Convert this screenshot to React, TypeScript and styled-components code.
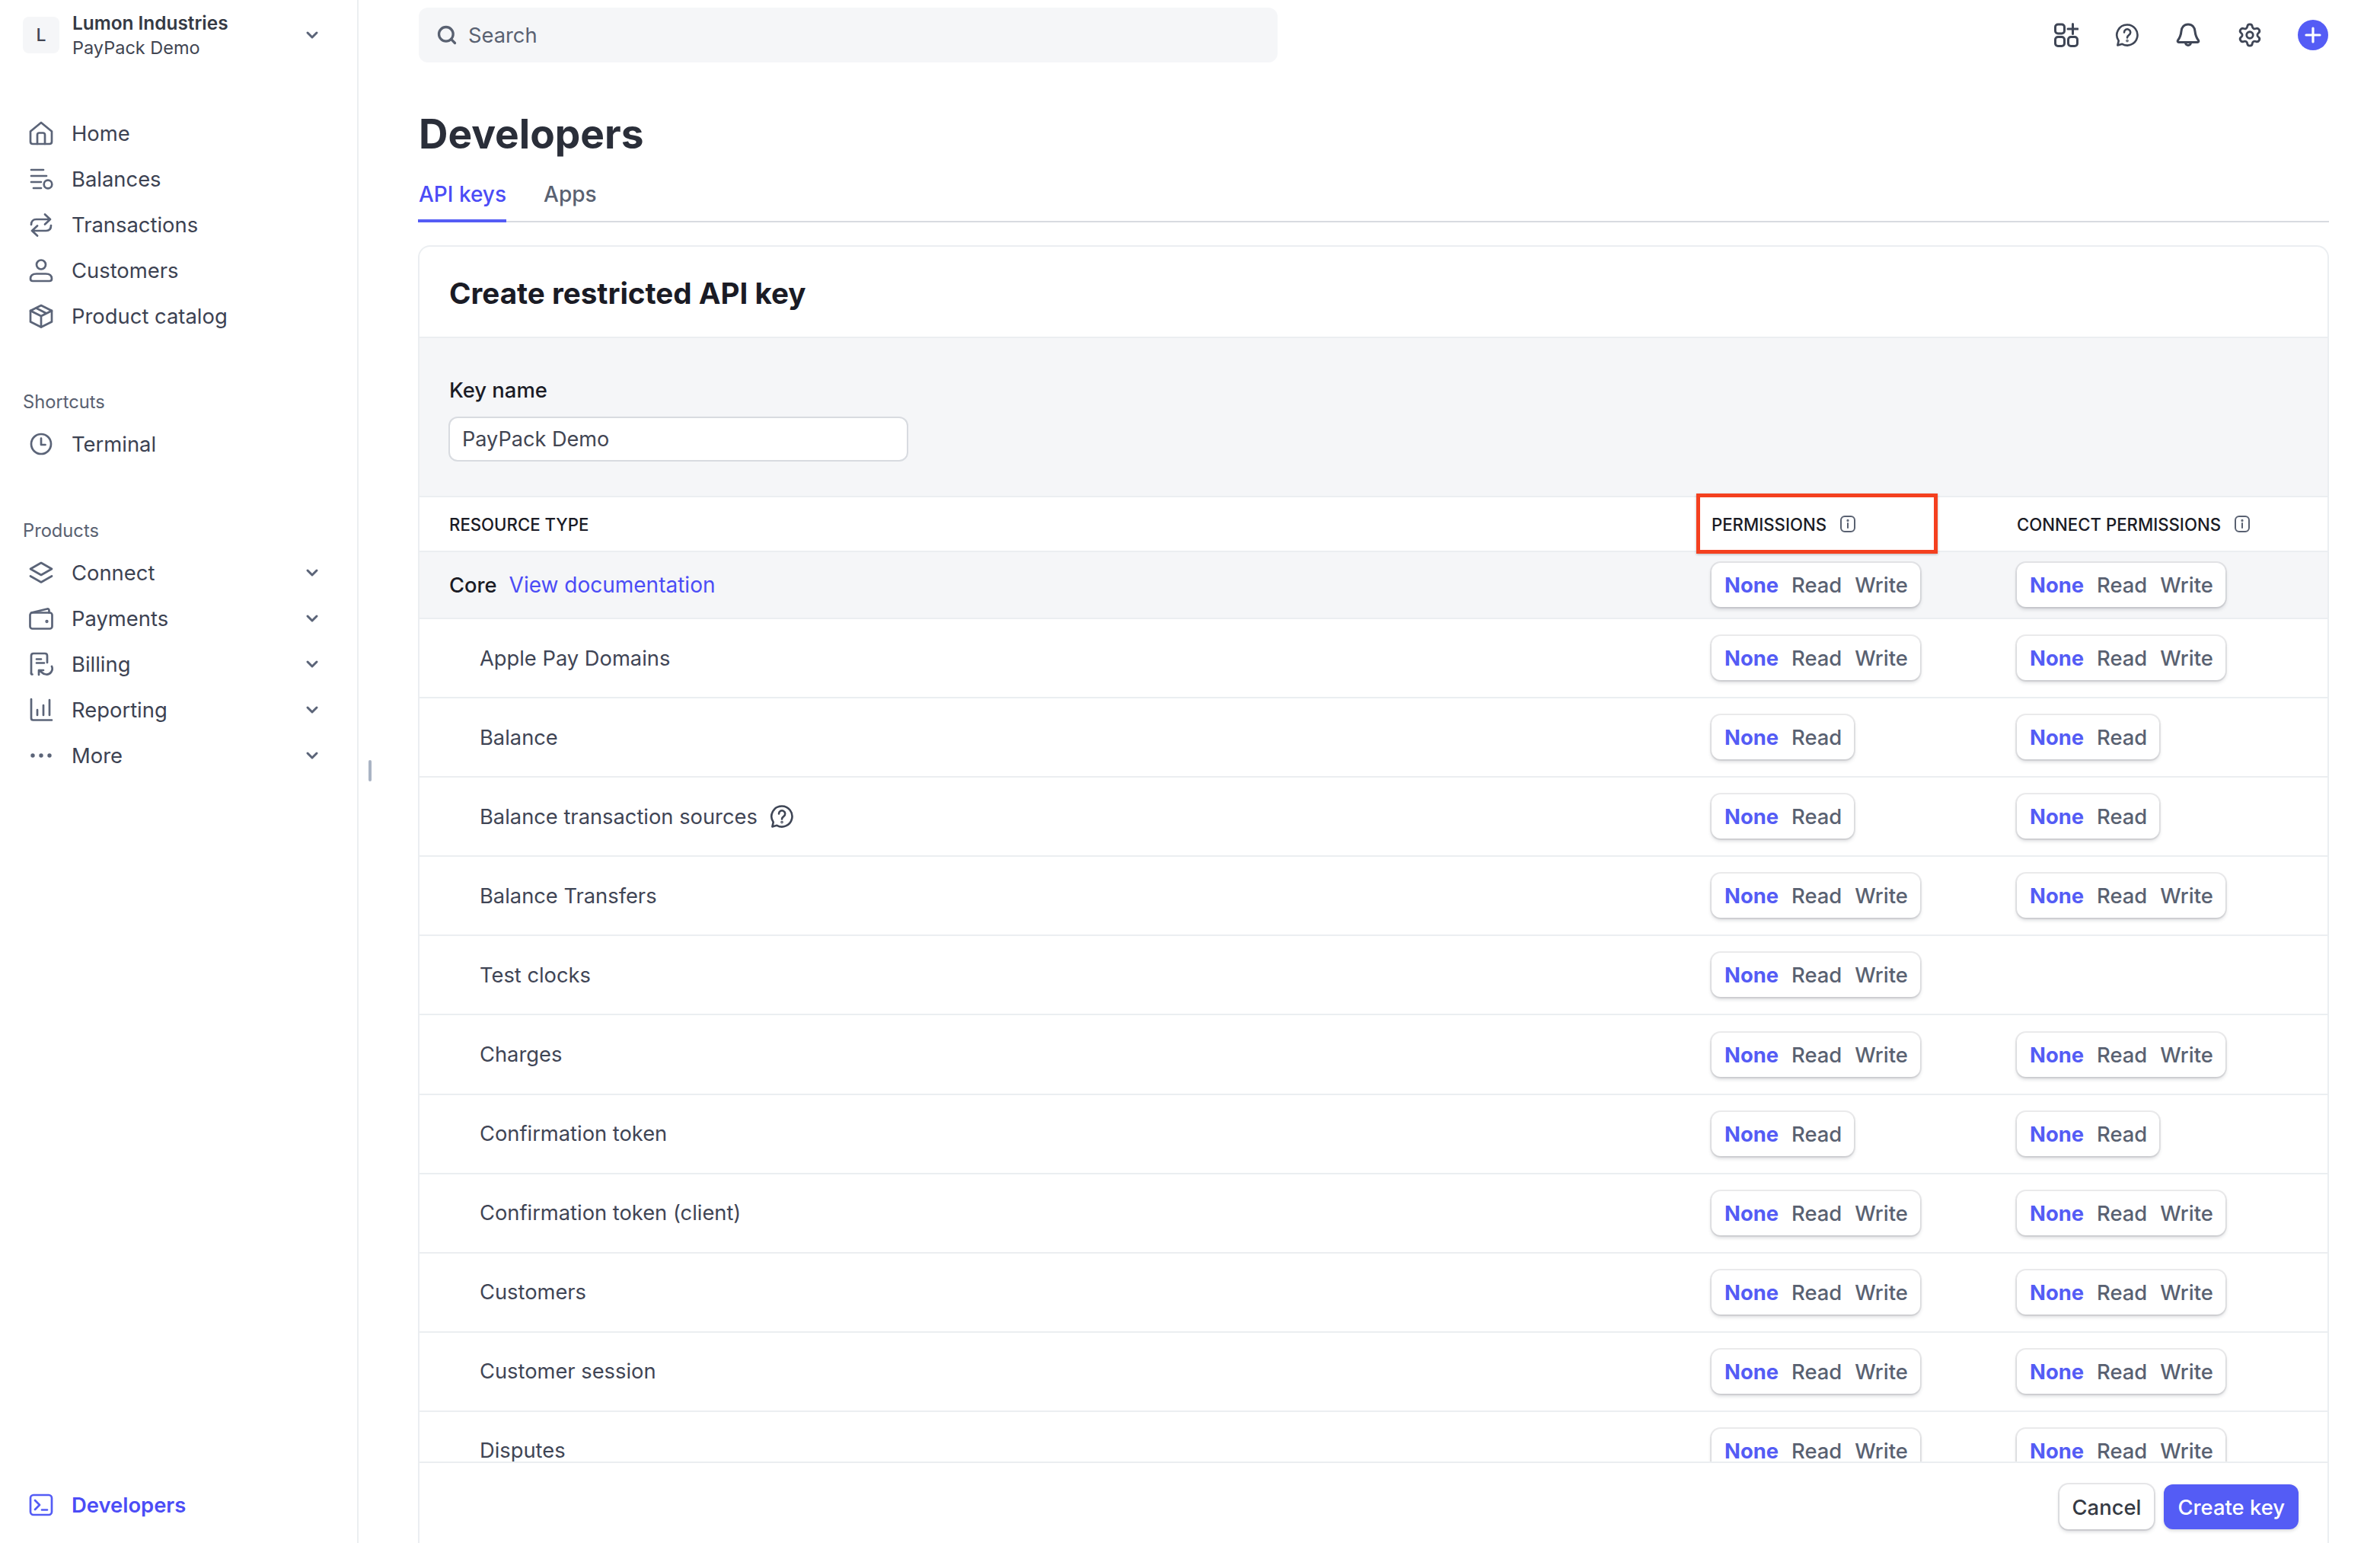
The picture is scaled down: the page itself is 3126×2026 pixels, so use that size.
import React from 'react';
import styled, { createGlobalStyle } from 'styled-components';
import { Search, Settings } from 'lucide-react';

const GlobalStyle = createGlobalStyle`
  * { box-sizing: border-box; }
  html, body { margin: 0; padding: 0; background: #fff; }
  body { font-family: Inter, "Liberation Sans", sans-serif; color: #353a44; }
`;

const Layout = styled.div`
  display: flex;
  width: 3126px;
  height: 2026px;
  overflow: hidden;
  position: relative;
`;

const Sidebar = styled.aside`
  width: 471px;
  flex-shrink: 0;
  height: 100%;
  border-right: 2px solid #ebeef1;
  padding: 22px 48px 20px 30px;
  display: flex;
  flex-direction: column;
`;

const Account = styled.div`
  display: flex;
  align-items: center;
  height: 48px;
  margin-bottom: 75px;
`;

const AccountBadge = styled.div`
  width: 48px;
  height: 48px;
  border-radius: 8px;
  background: #f5f6f8;
  display: flex;
  align-items: center;
  justify-content: center;
  font-size: 23px;
  font-weight: 500;
  color: #414552;
  margin-right: 17px;
`;

const AccountText = styled.div`
  flex: 1;
  display: flex;
  flex-direction: column;
  gap: 1px;
`;

const AccountName = styled.div`
  font-size: 24.4px;
  line-height: 31px;
  font-weight: 600;
  color: #353a44;
`;

const AccountSub = styled.div`
  font-size: 23.5px;
  line-height: 31px;
  color: #414552;
`;

const NavGroup = styled.div`
  display: flex;
  flex-direction: column;
`;

const NavRow = styled.div`
  height: 60px;
  display: flex;
  align-items: center;
  padding-left: 8px;
  gap: 24px;
`;

const NavLabel = styled.span<{ $active?: boolean }>`
  flex: 1;
  font-size: 27.4px;
  font-weight: ${({ $active }) => ($active ? 600 : 400)};
  color: ${({ $active }) => ($active ? '#4b4cf6' : '#3c4252')};
`;

const SectionLabel = styled.div<{ $top: number }>`
  font-size: 23.7px;
  line-height: 30px;
  color: #596171;
  margin-top: ${({ $top }) => $top}px;
  margin-bottom: 10px;
`;

const SidebarFoot = styled.div`
  margin-top: auto;
`;

const ResizeHandle = styled.div`
  position: absolute;
  left: 484px;
  top: 998px;
  width: 4px;
  height: 28px;
  border-radius: 2px;
  background: #aab4c4;
`;

const Main = styled.main`
  flex: 1;
  min-width: 0;
  height: 100%;
  padding: 0 67px 0 78px;
  display: flex;
  flex-direction: column;
`;

const TopBar = styled.div`
  height: 92px;
  flex-shrink: 0;
  display: flex;
  align-items: center;
  justify-content: space-between;
  padding: 0 1px 0 1px;
`;

const SearchBox = styled.div`
  width: 1128px;
  height: 72px;
  border-radius: 12px;
  background: #f5f6f8;
  display: flex;
  align-items: center;
  padding-left: 23px;
  gap: 14px;
  font-size: 27.3px;
  color: #596171;
`;

const TopIcons = styled.div`
  display: flex;
  align-items: center;
  gap: 48px;
  color: #3f4656;
`;

const AddButton = styled.div`
  width: 40px;
  height: 40px;
  margin-left: -2px;
  border-radius: 50%;
  background: #545cf5;
  display: flex;
  align-items: center;
  justify-content: center;
`;

const PageTitle = styled.h1`
  margin: 50px 0 0 1px;
  font-size: 53.2px;
  line-height: 68px;
  font-weight: 700;
  color: #2a2e39;
`;

const Tabs = styled.div`
  margin-top: 12px;
  display: flex;
  gap: 48px;
  border-bottom: 2px solid #d8dbe0;
  height: 70px;
`;

const Tab = styled.div<{ $active?: boolean }>`
  font-size: 28px;
  font-weight: 500;
  line-height: 34px;
  padding: 16px 0 0 1px;
  height: 70px;
  color: ${({ $active }) => ($active ? '#4b4cf6' : '#596171')};
  border-bottom: ${({ $active }) => ($active ? '4px solid #545cf5' : '4px solid transparent')};
`;

const Card = styled.section`
  margin-top: 30px;
  flex: 1;
  min-height: 0;
  border: 2px solid #ebeef1;
  border-bottom: 0;
  border-radius: 16px 16px 0 0;
  display: flex;
  flex-direction: column;
`;

const CardHead = styled.div`
  height: 120px;
  flex-shrink: 0;
  padding: 3px 0 0 39px;
  display: flex;
  align-items: center;
  font-size: 38.6px;
  font-weight: 700;
  color: #1a1b25;
  border-bottom: 2px solid #ebeef1;
`;

const KeySection = styled.div`
  flex-shrink: 0;
  height: 209px;
  background: #f5f6f8;
  padding: 51px 0 0 39px;
  border-bottom: 2px solid #ebeef1;
`;

const FieldLabel = styled.div`
  font-size: 27.4px;
  line-height: 34px;
  font-weight: 500;
  color: #1a1b25;
  margin-bottom: 18px;
`;

const NameInput = styled.div`
  width: 604px;
  height: 59px;
  margin-left: -1px;
  border: 2px solid #d8dbe0;
  border-radius: 12px;
  background: #fff;
  padding-left: 16px;
  display: flex;
  align-items: center;
  font-size: 27.1px;
  color: #414552;
`;

const TableArea = styled.div`
  flex: 1;
  min-height: 0;
  overflow: hidden;
`;

const columns = '1697px 401px 1fr';

const HeadRow = styled.div`
  height: 72px;
  flex-shrink: 0;
  display: grid;
  grid-template-columns: ${columns};
  border-bottom: 2px solid #ebeef1;
  position: relative;
  z-index: 1;
`;

const HeadCell = styled.div<{ $pad?: boolean }>`
  position: relative;
  display: flex;
  align-items: center;
  gap: 18px;
  padding-left: ${({ $pad }) => ($pad ? '39px' : '0')};
  font-size: 22.2px;
  font-weight: 500;
  color: #1a1b25;
`;

const Highlight = styled.div`
  position: absolute;
  left: -20px;
  top: -5px;
  width: 317px;
  height: 79px;
  border: 5px solid #f4401f;
  box-shadow: 0 1px 3px rgba(0, 0, 0, 0.25);
  pointer-events: none;
`;

const Row = styled.div<{ $group?: boolean }>`
  height: ${({ $group }) => ($group ? '88px' : '104.1px')};
  display: grid;
  grid-template-columns: ${columns};
  align-items: center;
  border-bottom: 2px solid #ebeef1;
  background: ${({ $group }) => ($group ? '#f5f6f8' : '#fff')};
`;

const RowName = styled.div<{ $group?: boolean }>`
  display: flex;
  align-items: center;
  padding-left: ${({ $group }) => ($group ? '39px' : '79px')};
  gap: 16px;
  font-size: 27.3px;
  font-weight: ${({ $group }) => ($group ? 500 : 400)};
  color: ${({ $group }) => ($group ? '#1a1b25' : '#3f4555')};
`;

const DocLink = styled.a`
  font-size: 28px;
  font-weight: 400;
  color: #4b4cf6;
`;

const Pill = styled.div`
  display: inline-flex;
  align-items: center;
  height: 58px;
  padding: 0 16px 0 17px;
  gap: 17px;
  border-radius: 12px;
  background: #fff;
  box-shadow: 0 0 0 2px rgba(64, 68, 82, 0.1), 0 3px 5px rgba(64, 68, 82, 0.22);
  font-size: 27.4px;
  font-weight: 500;
  color: #596171;
`;

const PillOption = styled.span<{ $active?: boolean }>`
  font-weight: ${({ $active }) => ($active ? 700 : 500)};
  color: ${({ $active }) => ($active ? '#545cf5' : '#596171')};
`;

const Footer = styled.div`
  height: 107px;
  flex-shrink: 0;
  border-top: 2px solid #ebeef1;
  background: #fff;
  padding: 28px 38px 0 0;
  display: flex;
  justify-content: flex-end;
  gap: 13px;
  position: relative;
`;

const Button = styled.div<{ $primary?: boolean }>`
  height: 59px;
  padding: 0 ${({ $primary }) => ($primary ? '18px' : '17px')};
  border-radius: 12px;
  display: flex;
  align-items: center;
  font-size: 27.4px;
  font-weight: 500;
  background: ${({ $primary }) => ($primary ? '#545cf5' : '#fff')};
  color: ${({ $primary }) => ($primary ? '#fff' : '#353a44')};
  box-shadow: ${({ $primary }) =>
    $primary
      ? '0 2px 4px rgba(64, 68, 82, 0.2)'
      : '0 0 0 2px rgba(64, 68, 82, 0.12), 0 3px 5px rgba(64, 68, 82, 0.22)'};
`;

type IconProps = { children: React.ReactNode; size?: number; color?: string; sw?: number };

const Ico = ({ children, size = 32, color = '#5b6478', sw = 2.7 }: IconProps) => (
  <svg
    width={size}
    height={size}
    viewBox="0 0 32 32"
    fill="none"
    stroke={color}
    strokeWidth={sw}
    strokeLinecap="round"
    strokeLinejoin="round"
    style={{ flexShrink: 0 }}
  >
    {children}
  </svg>
);

const Chevron = () => (
  <svg width="22" height="22" viewBox="0 0 22 22" fill="none" stroke="#5b6478" strokeWidth="3" strokeLinecap="round" strokeLinejoin="round" style={{ flexShrink: 0 }}>
    <path d="M5 8l6 6 6-6" />
  </svg>
);

const InfoIcon = () => (
  <svg width="20" height="22" viewBox="0 0 20 22" fill="none" stroke="#596171" strokeWidth="2" strokeLinecap="round" style={{ flexShrink: 0 }}>
    <rect x="1" y="1" width="18" height="20" rx="5" />
    <path d="M10 10v6" />
    <circle cx="10" cy="6.4" r="0.6" fill="#596171" />
  </svg>
);

const HelpIcon = ({ color = '#3f4656' }: { color?: string }) => (
  <Ico color={color} sw={2.6}>
    <path d="M16 2.5a13.5 13.5 0 1 1-6.6 25.3L3.4 29.4l1.3-5.8A13.5 13.5 0 0 1 16 2.5z" />
    <path d="M12 12.4a4.1 4.1 0 1 1 6.4 3.4c-1.6 1.1-2.4 1.9-2.4 3.6" />
    <circle cx="16" cy="23.6" r="0.5" fill={color} />
  </Ico>
);

const HomeIcon = () => (
  <Ico>
    <path d="M2 13.5L16 2l14 11.5V27c0 2-1 3-3 3H5c-2 0-3-1-3-3z" />
    <path d="M11 30V18c0-1.5.8-2.5 2.5-2.5h5c1.700 0 2.500 1 2.500 2.500v12" />
  </Ico>
);

const BalancesIcon = () => (
  <Ico>
    <path d="M3 4h16M3 12h20M3 20h13M6 28h10" />
    <circle cx="25" cy="23" r="5.300" />
  </Ico>
);

const TransactionsIcon = () => (
  <Ico>
    <path d="M3 16c0-4.500 2.500-7 6.500-7H28M21 2.500L28 9l-7 6.500" />
    <path d="M29 17c0 4.500-2.500 7-6.500 7H4M11 17.500L4 24l7 6.500" />
  </Ico>
);

const CustomersIcon = () => (
  <Ico>
    <circle cx="16" cy="8.500" r="6" />
    <path d="M2 27c0-4.500 3.500-6.500 8-6.500h12c4.500 0 8 2 8 6.500 0 2-1 3-3 3H5c-2 0-3-1-3-3z" />
  </Ico>
);

const BoxIcon = () => (
  <Ico>
    <path d="M16 2l14 7v14.500L16 30.500 2 23.500V9z" />
    <path d="M2 9l14 7 14-7M16 16v14.500M9.500 5.500l13.500 7" />
  </Ico>
);

const ClockIcon = () => (
  <Ico>
    <circle cx="16" cy="16" r="13" />
    <path d="M16 8.500V17h5.500" />
  </Ico>
);

const ConnectIcon = () => (
  <Ico>
    <path d="M16 3l14 8-14 8-14-8z" />
    <path d="M2 20.500l14 8 14-8" />
  </Ico>
);

const WalletIcon = () => (
  <Ico>
    <rect x="1.500" y="8.500" width="29" height="21" rx="3" />
    <path d="M3 8.500L24 3.500c1.500-.3 2.500.5 2.500 2v3" />
    <circle cx="23.500" cy="20" r="0.800" fill="#5b6478" />
  </Ico>
);

const BillingIcon = () => (
  <Ico>
    <path d="M3 28V5c0-2 1-3 3-3h15c2 0 3 1 3 3v9" />
    <path d="M10 9.500h6M10 14.500h10" />
    <path d="M3 28c0 .8.500 1.500 1.500 1.500" />
    <path d="M30 19a7.500 7.500 0 0 1-7.500 10.500c-2.500 0-4-1-5.500-2.500l-3-3M13 30v-6h6" />
  </Ico>
);

const ReportingIcon = () => (
  <Ico>
    <path d="M3 2v25c0 1.500 1 2.500 2.500 2.500H30" />
    <path d="M11 16v7M19 10v13M27 3v20" />
  </Ico>
);

const MoreIcon = () => (
  <svg width="32" height="32" viewBox="0 0 32 32" fill="#5b6478" style={{ flexShrink: 0 }}>
    <circle cx="5" cy="16" r="2.700" />
    <circle cx="16" cy="16" r="2.700" />
    <circle cx="27" cy="16" r="2.700" />
  </svg>
);

const TerminalIcon = () => (
  <Ico color="#545cf5">
    <rect x="2" y="3" width="28" height="26" rx="4" />
    <path d="M8 10l6 6-6 6M17 22.500h7" />
  </Ico>
);

const AppsIcon = () => (
  <Ico color="#3f4656" sw={3}>
    <rect x="1.500" y="2" width="12" height="12" rx="3.500" />
    <rect x="1.500" y="18.500" width="12" height="12" rx="3.500" />
    <rect x="18.500" y="18.500" width="12" height="12" rx="3.500" />
    <path d="M24.500 1.500v13M18 8h13" />
  </Ico>
);

const BellIcon = () => (
  <Ico color="#3f4656" sw={3}>
    <path d="M16 2c-5.500 0-8.500 4-9 9-.5 5-1.500 8-4.500 12-.8 1.200-.2 2.500 1.200 2.500h24.600c1.400 0 2-1.300 1.200-2.500-3-4-4-7-4.500-12-.5-5-3.500-9-9-9z" />
    <path d="M12.500 26a3.500 3.500 0 0 0 7 0" />
  </Ico>
);

type Access = 'rw' | 'r' | null;

type ResourceRow = {
  name: string;
  perm: Access;
  connect: Access;
  help?: boolean;
};

const rows: ResourceRow[] = [
  { name: 'Apple Pay Domains', perm: 'rw', connect: 'rw' },
  { name: 'Balance', perm: 'r', connect: 'r' },
  { name: 'Balance transaction sources', perm: 'r', connect: 'r', help: true },
  { name: 'Balance Transfers', perm: 'rw', connect: 'rw' },
  { name: 'Test clocks', perm: 'rw', connect: null },
  { name: 'Charges', perm: 'rw', connect: 'rw' },
  { name: 'Confirmation token', perm: 'r', connect: 'r' },
  { name: 'Confirmation token (client)', perm: 'rw', connect: 'rw' },
  { name: 'Customers', perm: 'rw', connect: 'rw' },
  { name: 'Customer session', perm: 'rw', connect: 'rw' },
  { name: 'Disputes', perm: 'rw', connect: 'rw' },
];

const AccessPill = ({ access }: { access: Access }) => {
  if (!access) return <div />;
  return (
    <div>
      <Pill>
        <PillOption $active>None</PillOption>
        <PillOption>Read</PillOption>
        {access === 'rw' && <PillOption>Write</PillOption>}
      </Pill>
    </div>
  );
};

const primaryNav = [
  { label: 'Home', icon: <HomeIcon /> },
  { label: 'Balances', icon: <BalancesIcon /> },
  { label: 'Transactions', icon: <TransactionsIcon /> },
  { label: 'Customers', icon: <CustomersIcon /> },
  { label: 'Product catalog', icon: <BoxIcon /> },
];

const productNav = [
  { label: 'Connect', icon: <ConnectIcon /> },
  { label: 'Payments', icon: <WalletIcon /> },
  { label: 'Billing', icon: <BillingIcon /> },
  { label: 'Reporting', icon: <ReportingIcon /> },
  { label: 'More', icon: <MoreIcon /> },
];

const App = () => (
  <Layout>
    <GlobalStyle />
    <Sidebar>
      <Account>
        <AccountBadge>L</AccountBadge>
        <AccountText>
          <AccountName>Lumon Industries</AccountName>
          <AccountSub>PayPack Demo</AccountSub>
        </AccountText>
        <Chevron />
      </Account>
      <NavGroup>
        {primaryNav.map((item) => (
          <NavRow key={item.label}>
            {item.icon}
            <NavLabel>{item.label}</NavLabel>
          </NavRow>
        ))}
      </NavGroup>
      <SectionLabel $top={68}>Shortcuts</SectionLabel>
      <NavGroup>
        <NavRow>
          <ClockIcon />
          <NavLabel>Terminal</NavLabel>
        </NavRow>
      </NavGroup>
      <SectionLabel $top={69}>Products</SectionLabel>
      <NavGroup>
        {productNav.map((item) => (
          <NavRow key={item.label}>
            {item.icon}
            <NavLabel>{item.label}</NavLabel>
            <Chevron />
          </NavRow>
        ))}
      </NavGroup>
      <SidebarFoot>
        <NavRow>
          <TerminalIcon />
          <NavLabel $active>Developers</NavLabel>
        </NavRow>
      </SidebarFoot>
    </Sidebar>
    <ResizeHandle />
    <Main>
      <TopBar>
        <SearchBox>
          <Search size={28} strokeWidth={2.8} color="#596171" />
          Search
        </SearchBox>
        <TopIcons>
          <AppsIcon />
          <HelpIcon />
          <BellIcon />
          <Settings size={34} strokeWidth={2} />
          <AddButton>
            <svg width="22" height="22" viewBox="0 0 22 22" stroke="#fff" strokeWidth="3.200" strokeLinecap="round">
              <path d="M11 2v18M2 11h18" />
            </svg>
          </AddButton>
        </TopIcons>
      </TopBar>
      <PageTitle>Developers</PageTitle>
      <Tabs>
        <Tab $active>API keys</Tab>
        <Tab>Apps</Tab>
      </Tabs>
      <Card>
        <CardHead>Create restricted API key</CardHead>
        <KeySection>
          <FieldLabel>Key name</FieldLabel>
          <NameInput>PayPack Demo</NameInput>
        </KeySection>
        <HeadRow>
          <HeadCell $pad>RESOURCE TYPE</HeadCell>
          <HeadCell>
            PERMISSIONS <InfoIcon />
            <Highlight />
          </HeadCell>
          <HeadCell>
            CONNECT PERMISSIONS <InfoIcon />
          </HeadCell>
        </HeadRow>
        <TableArea>
          <Row $group>
            <RowName $group>
              Core <DocLink>View documentation</DocLink>
            </RowName>
            <AccessPill access="rw" />
            <AccessPill access="rw" />
          </Row>
          {rows.map((row) => (
            <Row key={row.name}>
              <RowName>
                {row.name}
                {row.help && <HelpIcon />}
              </RowName>
              <AccessPill access={row.perm} />
              <AccessPill access={row.connect} />
            </Row>
          ))}
        </TableArea>
        <Footer>
          <Button>Cancel</Button>
          <Button $primary>Create key</Button>
        </Footer>
      </Card>
    </Main>
  </Layout>
);

export default App;
